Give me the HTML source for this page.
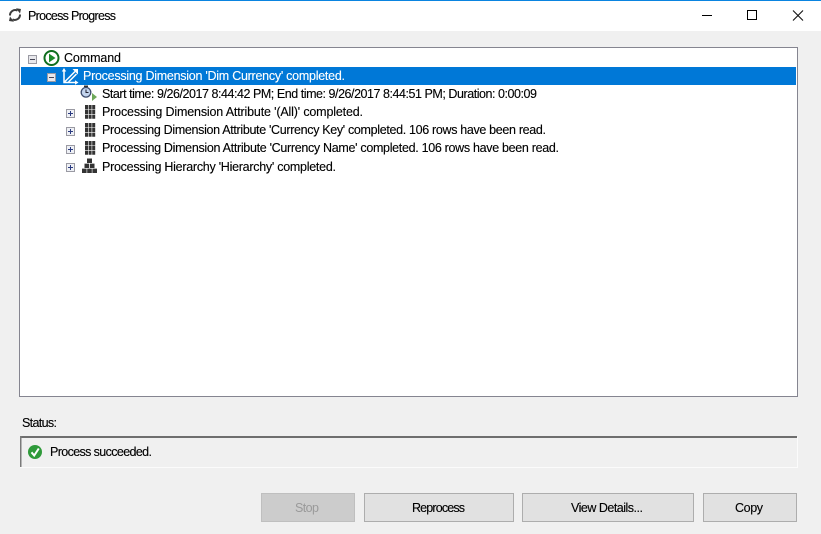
<!DOCTYPE html>
<html><head><meta charset="utf-8"><title>Process Progress</title>
<style>
html,body{margin:0;padding:0;background:#f0f0f0}
svg{display:block}
text{font-family:"Liberation Sans",sans-serif;font-size:12.5px;fill:#000;stroke:#000;stroke-width:.12px}
</style></head>
<body>
<svg width="821" height="534" viewBox="0 0 821 534" xmlns="http://www.w3.org/2000/svg">
<rect width="821" height="534" fill="#f0f0f0"/>
<rect width="821" height="31" fill="#fff"/>
<rect width="821" height="1" fill="#0a84e0"/>
<!-- window icon -->
<g fill="none" stroke="#3c3c3c" stroke-width="2">
<path d="M10 15.5A5.2 5.2 0 0 1 17.5 10.6"/>
<path d="M20 14.5A5.2 5.2 0 0 1 12.5 19.4"/>
</g>
<path d="M16 8.2L21 9L20 13.5Z M14 21.8L9 21L10 16.5Z" fill="#3c3c3c"/>
<text x="28" y="20" textLength="88" lengthAdjust="spacing">Process Progress</text>
<!-- caption buttons -->
<rect x="702" y="15" width="10" height="1" fill="#000"/>
<rect x="747.5" y="10.5" width="9" height="9" fill="none" stroke="#000"/>
<path d="M793 10.5L803 20.5M803 10.5L793 20.5" stroke="#111" stroke-width="1.1" fill="none"/>
<!-- tree -->
<rect x="19.5" y="47.5" width="778" height="349" fill="#fff" stroke="#858590"/>
<rect x="21" y="67" width="775" height="18" fill="#0078d7"/>
<!-- minus boxes -->
<rect x="28.5" y="55.5" width="8" height="8" fill="#e8e8ec" stroke="#9a9aa3"/>
<rect x="30" y="59" width="5" height="1" fill="#445"/>
<rect x="47.5" y="73.5" width="8" height="8" fill="#e8e8ec" stroke="#9a9aa3"/>
<rect x="49" y="77" width="5" height="1" fill="#445"/>
<!-- command icon -->
<circle cx="51.5" cy="58" r="7" fill="#fff" stroke="#0f6e1e" stroke-width="2"/>
<path d="M49 53.6L55.5 58L49 62.4Z" fill="#1c8a2a"/>
<!-- dimension icon -->
<g fill="none" stroke="#fff" stroke-width="1.5">
<path d="M64 70V82.5H76"/>
<path d="M64.5 82L75 71.5"/>
<path d="M68.5 82L76.5 74"/>
</g>
<path d="M61.8 71.5L64 68L66.2 71.5Z M75 80.3L78.5 82.5L75 84.7Z M72.5 69H78V74.5Z" fill="#fff"/>
<!-- clock icon -->
<circle cx="86" cy="92.3" r="4.8" fill="#c3d4ee" stroke="#3f4d6e" stroke-width="1.3"/>
<path d="M86 89.5V92.5H88.5" stroke="#223" fill="none"/>
<rect x="84" y="85.5" width="4" height="1.6" fill="#333"/>
<path d="M92 93L97 97L92 101Z" fill="#6fa85a"/>
<!-- plus boxes -->
<g fill="#eef0f5" stroke="#9a9aa3">
<rect x="66.5" y="109.5" width="8" height="8"/>
<rect x="66.5" y="127.5" width="8" height="8"/>
<rect x="66.5" y="145.5" width="8" height="8"/>
<rect x="66.5" y="163.5" width="8" height="8"/>
</g>
<path d="M68 113.5h5M70.5 111v5M68 131.5h5M70.5 129v5M68 149.5h5M70.5 147v5M68 167.5h5M70.5 165v5" stroke="#2a3a80" fill="none"/>
<!-- grid icons -->
<g fill="#333">
<path d="M85 105h3v4.2h-3zM88.6 105h3v4.2h-3zM92.2 105h3v4.2h-3zM85 109.8h3v4.2h-3zM88.6 109.8h3v4.2h-3zM92.2 109.8h3v4.2h-3zM85 114.6h3v4.2h-3zM88.6 114.6h3v4.2h-3zM92.2 114.6h3v4.2h-3z"/>
<path transform="translate(0,18)" d="M85 105h3v4.2h-3zM88.6 105h3v4.2h-3zM92.2 105h3v4.2h-3zM85 109.8h3v4.2h-3zM88.6 109.8h3v4.2h-3zM92.2 109.8h3v4.2h-3zM85 114.6h3v4.2h-3zM88.6 114.6h3v4.2h-3zM92.2 114.6h3v4.2h-3z"/>
<path transform="translate(0,36)" d="M85 105h3v4.2h-3zM88.6 105h3v4.2h-3zM92.2 105h3v4.2h-3zM85 109.8h3v4.2h-3zM88.6 109.8h3v4.2h-3zM92.2 109.8h3v4.2h-3zM85 114.6h3v4.2h-3zM88.6 114.6h3v4.2h-3zM92.2 114.6h3v4.2h-3z"/>
<path d="M87 158.5h5v4.5h-5zM84.5 163.6h4.6v4.4h-4.6zM89.9 163.6h4.6v4.4h-4.6zM82 168.6h4.6v4.4H82zM87.2 168.6h4.6v4.4h-4.6zM92.4 168.6h4.6v4.4h-4.6z"/>
</g>
<!-- tree text -->
<text x="64" y="62" textLength="57" lengthAdjust="spacing">Command</text>
<text x="83" y="80" textLength="262" lengthAdjust="spacing" style="fill:#fff;stroke:#fff">Processing Dimension 'Dim Currency' completed.</text>
<text x="102" y="98" textLength="435" lengthAdjust="spacing">Start time: 9/26/2017 8:44:42 PM; End time: 9/26/2017 8:44:51 PM; Duration: 0:00:09</text>
<text x="102" y="116" textLength="261" lengthAdjust="spacing">Processing Dimension Attribute '(All)' completed.</text>
<text x="102" y="134" textLength="444" lengthAdjust="spacing">Processing Dimension Attribute 'Currency Key' completed. 106 rows have been read.</text>
<text x="102" y="152" textLength="457" lengthAdjust="spacing">Processing Dimension Attribute 'Currency Name' completed. 106 rows have been read.</text>
<text x="102" y="171" textLength="234" lengthAdjust="spacing">Processing Hierarchy 'Hierarchy' completed.</text>
<!-- status -->
<text x="22" y="427" textLength="35" lengthAdjust="spacing">Status:</text>
<rect x="20" y="436" width="777" height="31" fill="#f0f0f0"/>
<path d="M20 467.5H797.5V437" fill="none" stroke="#fbfbfb"/>
<rect x="20" y="436" width="777" height="2" fill="#6e6e6e"/>
<rect x="20" y="436" width="1.5" height="31" fill="#7a7a7a"/>
<circle cx="35" cy="452" r="7" fill="#2f9a3a"/>
<path d="M31.5 452.3L34.2 455.5L38.8 448.5" fill="none" stroke="#fff" stroke-width="2"/>
<text x="50" y="456" textLength="102" lengthAdjust="spacing">Process succeeded.</text>
<!-- buttons -->
<rect x="261.5" y="493.5" width="93" height="28" fill="#cccccc" stroke="#bfbfbf"/>
<rect x="364.5" y="493.5" width="149" height="28" fill="#e1e1e1" stroke="#adadad"/>
<rect x="522.5" y="493.5" width="171" height="28" fill="#e1e1e1" stroke="#adadad"/>
<rect x="703.5" y="493.5" width="93" height="28" fill="#e1e1e1" stroke="#adadad"/>
<text x="295" y="512" textLength="24" lengthAdjust="spacing" style="fill:#9a9a9a;stroke:none">Stop</text>
<text x="412" y="512" textLength="53" lengthAdjust="spacing">Reprocess</text>
<text x="571" y="512" textLength="72" lengthAdjust="spacing">View Details...</text>
<text x="735" y="512" textLength="28" lengthAdjust="spacing">Copy</text>
</svg>
</body></html>
